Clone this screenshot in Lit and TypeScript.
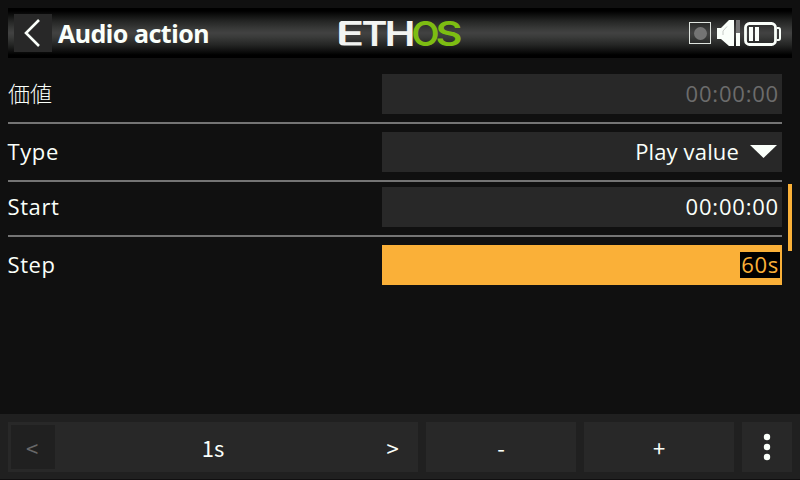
import { LitElement, html, css } from "lit";
import { customElement, state } from "lit/decorators.js";

interface Row { label: string; value: string; kind: string; }

@customElement("app-root")
export class AppRoot extends LitElement {
  @state() private rows: Row[] = [
    { label: "価値", value: "00:00:00", kind: "disabled" },
    { label: "Type", value: "Play value", kind: "choice" },
    { label: "Start", value: "00:00:00", kind: "plain" },
    { label: "Step", value: "60s", kind: "editing" },
  ];

  static styles = css`
    :host { display: block; }
    * { box-sizing: border-box; }
    .screen { width: 800px; height: 480px; background: #101010; color: #fafffa; display: flex; flex-direction: column; padding-top: 8px; overflow: hidden; font: 22px/30px "Noto Sans CJK JP", sans-serif; }
    .header { height: 50px; margin: 0 8px; padding: 0 11px 0 6px; display: grid; grid-template-columns: 324px 124px 1fr; align-items: center; background: linear-gradient(#000 0 6%, #242524 26%, #3a3b3a 42%, #424242 50%, #3a3b3a 58%, #242524 74%, #000 94%); }
    .heading { display: flex; align-items: center; gap: 6px; }
    .back { width: 38px; height: 38px; background: #282828; }
    .title { font: 700 25px/37px "Noto Sans", sans-serif; letter-spacing: -.5px; white-space: nowrap; }
    .status { justify-self: end; }
    svg { display: block; }
    .main { height: 356px; padding: 16px 8px 0; display: flex; justify-content: space-between; }
    .form { width: 774px; font-family: "Open Sans", "Noto Sans CJK JP", sans-serif; font-kerning: none; }
    .row { display: grid; grid-template-columns: 374px 400px; height: 50px; align-items: start; border-bottom: 2px solid #747474; margin-bottom: 8px; letter-spacing: .6px; }
    .row.choice { margin-bottom: 5px; }
    .row.editing { border: 0; }
    .label { line-height: 38px; text-indent: -.5px; }
    .disabled .label { font-weight: 300; letter-spacing: 0; text-indent: 0; }
    .field { height: 40px; background: #282828; line-height: 38px; display: flex; justify-content: flex-end; align-items: flex-start; padding-right: 3px; }
    .field .value { letter-spacing: .8px; }
    .disabled .field { color: #6c6c6c; }
    .choice .field { gap: 11px; padding-right: 5px; }
    .choice .field .value { letter-spacing: .15px; }
    .arrow-down { margin-top: 13px; }
    .editing .field { background: #fab038; padding: 7px 2px 0 0; }
    .editing .field .value { background: #000; color: #fab038; height: 26px; line-height: 24px; padding: 0 1px 0 1.500px; letter-spacing: .7px; }
    .scroll { width: 4px; height: 67px; background: #fab038; margin-top: 110px; }
    .footer { height: 66px; background: #202020; border-bottom: 1px solid #100f10; padding: 8px; display: grid; grid-template-columns: 410px 150px 150px 50px; gap: 8px; }
    .key { height: 50px; background: #282828; display: flex; align-items: center; justify-content: center; }
    .stepper { justify-content: space-between; padding: 3px; }
    .arrow { width: 44px; height: 44px; padding-right: 2px; display: flex; align-items: center; justify-content: center; }
    .next { padding-right: 1px; }
    .off { background: #202020; color: #686868; }
    .logo { font: 600 34.500px Inter, sans-serif; }
  `;

  render() {
    return html`<div class="screen">
      <div class="header">
        <div class="heading">
          <div class="back"><svg width="38" height="38"><path d="M25 6L12 19L25 32" fill="none" stroke="#fafffa" stroke-width="2.6"/></svg></div>
          <div class="title">Audio action</div>
        </div>
        <svg class="logo" width="124" height="26" viewBox="0 0 124 26" overflow="visible">
          <clipPath id="round"><rect x="0" y=".4" width="60" height="25.100" rx="5.500"/></clipPath>
          <g fill="#f2f4f2">
            <text x="-2.200" y="25.500" textLength="28.500" lengthAdjust="spacingAndGlyphs" clip-path="url(#round)">E</text>
            <text x="23.500" y="25.500" textLength="26" lengthAdjust="spacingAndGlyphs">T</text>
            <text x="46.500" y="25.500" textLength="31" lengthAdjust="spacingAndGlyphs">H</text>
          </g>
          <g fill="#7dbd12">
            <text x="73.500" y="25.500" textLength="28" lengthAdjust="spacingAndGlyphs">O</text>
            <text x="97.500" y="25.500" textLength="27" lengthAdjust="spacingAndGlyphs">S</text>
          </g>
        </svg>
        <svg class="status" width="93" height="28" viewBox="0 0 93 28">
          <rect x="1.5" y="3.5" width="21" height="21" fill="none" stroke="#dfe4df"/>
          <circle cx="12.5" cy="14.5" r="6.5" fill="#747474"/>
          <path d="M29 9H33L41 1H46V27H41L33 20H29Z" fill="#fafffa"/>
          <path d="M35 16V12L39 7.500" fill="none" stroke="#b0b4b0" stroke-width=".7"/>
          <path d="M48 1H52V14H48Z" fill="#747474"/><path d="M48 14H52V27H48Z" fill="#fafffa"/>
          <rect x="57.500" y="4.500" width="30" height="21" rx="4" fill="none" stroke="#fafffa" stroke-width="2.800"/>
          <path d="M89 9H90.500Q92 9 92 11V19Q92 21 90.500 21H89" fill="none" stroke="#fafffa" stroke-width="2"/>
          <path d="M61 8H65V22H61ZM67 8H71V22H67Z" fill="#fafffa"/>
        </svg>
      </div>
      <div class="main">
        <div class="form">${this.rows.map((r) => html`<div class="row ${r.kind}">
          <div class="label">${r.label}</div>
          <div class="field"><span class="value">${r.value}</span>${r.kind === "choice" ? html`<svg class="arrow-down" width="27" height="13"><path d="M0 0H27L13.500 13Z" fill="#fafffa"/></svg>` : ""}</div>
        </div>`)}</div>
        <div class="scroll"></div>
      </div>
      <div class="footer">
        <div class="key stepper"><span class="arrow off">&lt;</span><span>1s</span><span class="arrow next">&gt;</span></div>
        <div class="key">-</div>
        <div class="key">+</div>
        <div class="key"><svg width="8" height="28" fill="#fafffa"><circle cx="4" cy="4" r="3.200"/><circle cx="4" cy="14" r="3.200"/><circle cx="4" cy="24" r="3.200"/></svg></div>
      </div>
    </div>`;
  }
}
